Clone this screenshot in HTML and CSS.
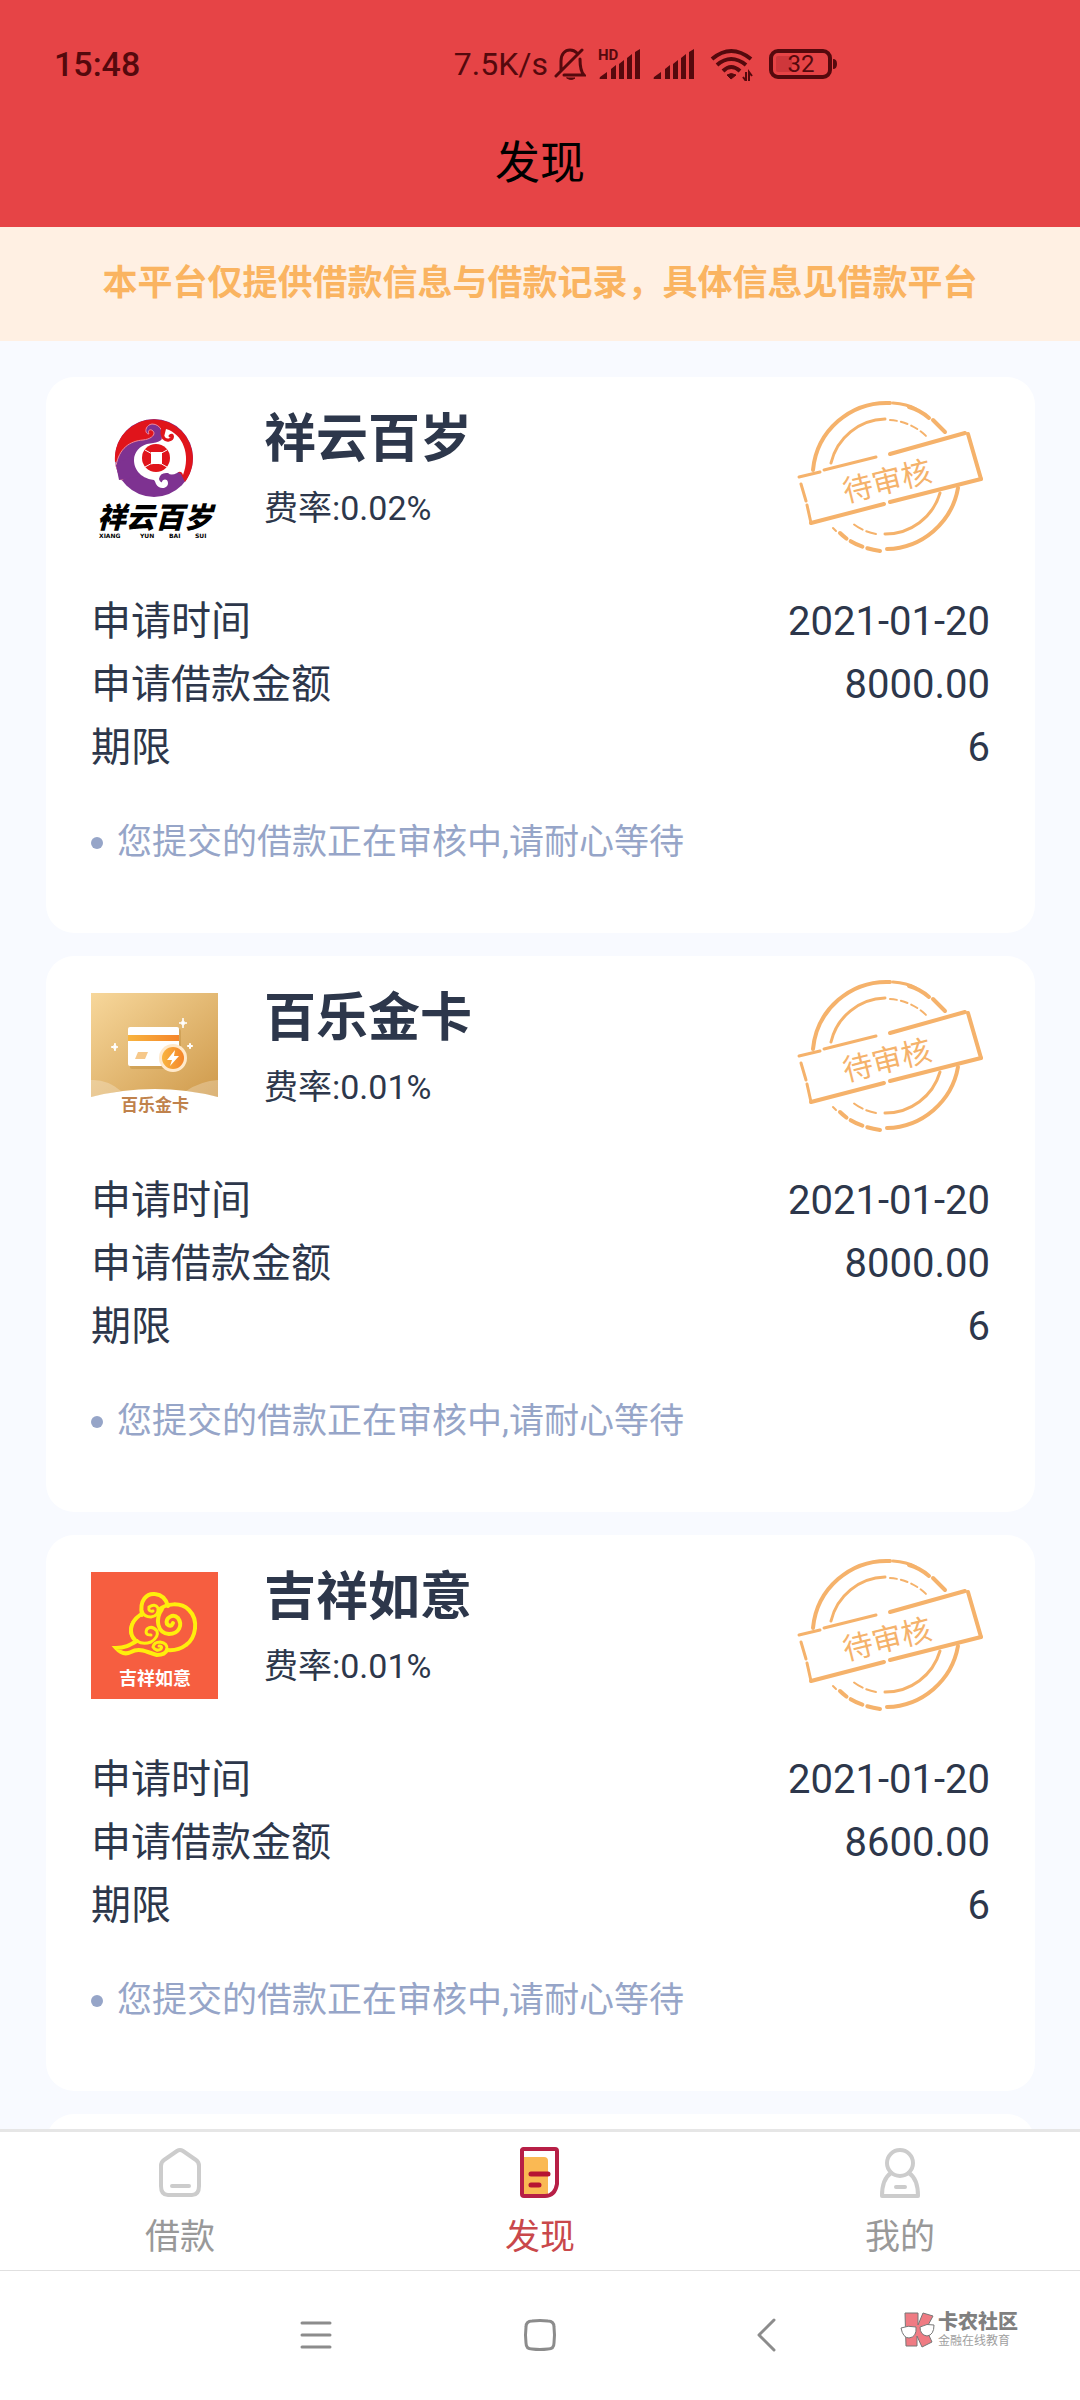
FILE: index.html
```html
<!DOCTYPE html>
<html lang="zh-CN">
<head>
<meta charset="utf-8">
<meta name="viewport" content="width=device-width, initial-scale=1">
<title>发现</title>
<link rel="stylesheet" href="styles.css">
</head>
<body>
<svg class="defs" aria-hidden="true">
	<symbol id="stamp" viewBox="0 0 190 160">
		<g fill="none" stroke="#f5b26b" stroke-linecap="round">
			<path d="M17 72A74 74 0 0 1 94 5" stroke-width="4"/>
			<path d="M97 5Q111 6 120 11" stroke-width="3"/>
			<path d="M113 9Q124 12 133 20M137 22L149 34" stroke-width="4"/>
			<path d="M35 65A57 57 0 0 1 89 21" stroke-width="3"/>
			<path d="M94 22A57 57 0 0 1 132 40" stroke-width="2" stroke-dasharray="7 4"/>
			<path d="M162 90A74 74 0 0 1 91 151" stroke-width="4"/>
			<path d="M84 153Q58 149 44 135" stroke-width="4" stroke-dasharray="13 5"/>
			<path d="M37 130L40 133" stroke-width="2"/>
			<path d="M144 95A57 57 0 0 1 89 136" stroke-width="3"/>
			<path d="M80 136Q65 133 55 124" stroke-width="2" stroke-dasharray="10 4"/>
			<path d="M3 79L24 74M28 72L80 59" stroke-width="3"/>
			<path d="M94 56L169 35" stroke-width="4"/>
			<path d="M172 36L185 81" stroke-width="4"/>
			<path d="M185 81L94 104M88 106L15 125" stroke-width="4"/>
			<path d="M5 86L10 103M11 107L15 125" stroke-width="3"/>
		</g>
	</symbol>
</svg>

<header class="header">
	<div class="status">
		<span class="time">15:48</span>
		<div class="status-icons">
			<span class="speed">7.5K/s</span>
			<svg width="32" height="34" viewBox="0 0 32 34" fill="none" stroke="#55090d" stroke-width="3" stroke-linecap="round">
				<path d="M7 23V14C7 7 11 3 16 3C19 3 21 4 23 6M26 12C26 20 27 25 30 28H10M2 29L28 3"/>
				<path d="M13 31H21Q17 34 13 31Z" fill="#55090d" stroke-width="1"/>
			</svg>
			<svg class="signal-hd" width="42" height="34" viewBox="0 0 42 34" fill="#55090d">
				<text class="hd" x="0" y="13">HD</text>
				<path d="M2 32Q1 32 2 30L9 25V32ZM13 22L18 18V32H13ZM21 17L26 13V32H21ZM29 11L34 7V32H29ZM37 5L42 2V32H37Z"/>
			</svg>
			<svg class="signal" width="42" height="34" viewBox="0 0 42 34" fill="#55090d">
				<path d="M2 32Q1 32 2 30L9 25V32ZM13 22L18 18V32H13ZM21 17L26 13V32H21ZM29 11L34 7V32H29ZM37 5L42 2V32H37Z"/>
			</svg>
			<svg class="wifi" width="43" height="34" viewBox="0 0 43 34" fill="none" stroke="#55090d" stroke-width="4">
				<path d="M2 12Q21 -4 41 12M7 18Q21 6 36 18M13 24Q21 16 30 24"/>
				<path d="M17 28Q21 25 26 28L21 32Z" fill="#55090d" stroke-width="1"/>
				<path d="M36 25V34L33 30M39 34V25L42 29" stroke-width="2"/>
			</svg>
			<svg class="battery" width="69" height="34" viewBox="0 0 69 34">
				<rect x="2" y="4" width="59" height="26" rx="7" fill="none" stroke="#55090d" stroke-width="4"/>
				<rect x="7" y="9" width="16" height="16" rx="2" fill="#cf373b"/>
				<path d="M64 12Q68 12 68 17Q68 22 64 22Z" fill="#55090d"/>
				<text class="level" x="32" y="25" text-anchor="middle">32</text>
			</svg>
		</div>
	</div>
	<h1 class="title">发现</h1>
</header>

<p class="notice">本平台仅提供借款信息与借款记录，具体信息见借款平台</p>

<main class="list">
	<section class="card">
		<div class="card-head">
			<svg class="logo" viewBox="0 0 127 127">
				<circle cx="63" cy="44" r="39" fill="#7e3291"/>
				<path d="M24 48A39 39 0 1 1 94 68L90 60L60 40Z" fill="#e0141b"/>
				<path d="M25 52C28 34 39 27 52 26C61 25 65 20 62 17C59 14 56 17 58 20C53 20 54 11 61 10C70 10 74 20 70 27L60 50L30 66Z" fill="#7e3291" stroke="#f08a9a" stroke-width="1"/>
				<path d="M25 51L62 29L60 60L28 66Z" fill="#7e3291"/>
				<path d="M75 15C92 20 100 41 92 61C91 57 88 57 86 59Q80 62 77 59Q69 58 68 65Q69 69 71 68C71 65 77 64 77 69C77 75 68 76 65 70Q64 67 63 66C48 64 43 54 43 46C43 38 49 32 56 30C65 29 71 27 73 23Z" fill="#fff"/>
				<path d="M73 12C68 20 73 27 78 26C83 25 82 19 79 22" fill="none" stroke="#e0141b" stroke-width="3" stroke-linecap="round"/>
				<circle cx="65" cy="44" r="14" fill="#e0141b"/>
				<rect x="60" y="38" width="11" height="12" fill="#fff"/>
				<path d="M54 36Q65 44 76 36M54 53Q65 45 76 53" fill="none" stroke="#fff" stroke-width="1"/>
				<text class="mark" x="64" y="114" text-anchor="middle" font-size="29" font-style="italic" font-weight="900" fill="#000">祥云百岁</text>
				<text class="mark-latin" x="8" y="124">XIANG</text>
				<text class="mark-latin" x="49" y="124">YUN</text>
				<text class="mark-latin" x="78" y="124">BAI</text>
				<text class="mark-latin" x="104" y="124">SUI</text>
			</svg>
			<div class="info">
				<h2 class="name">祥云百岁</h2>
				<p class="rate">费率:0.02%</p>
			</div>
			<svg class="stamp" viewBox="0 0 190 160">
				<use href="#stamp"/>
				<text class="stamp-text" x="91" y="94" text-anchor="middle" transform="rotate(-14 91 83)">待审核</text>
			</svg>
		</div>
		<dl class="rows">
			<div class="row"><dt>申请时间</dt><dd>2021-01-20</dd></div>
			<div class="row"><dt>申请借款金额</dt><dd>8000.00</dd></div>
			<div class="row"><dt>期限</dt><dd>6</dd></div>
		</dl>
		<p class="hint">您提交的借款正在审核中,请耐心等待</p>
	</section>

	<section class="card">
		<div class="card-head">
			<svg class="logo" viewBox="0 0 127 127">
				<defs>
					<linearGradient id="gold" x1="0" y1="0" x2="1" y2="1">
						<stop offset="0" stop-color="#f7d79b"/>
						<stop offset="1" stop-color="#cf9a4b"/>
					</linearGradient>
					<linearGradient id="orange" x1="0" y1="0" x2="1" y2="0">
						<stop offset="0" stop-color="#f8b43f"/>
						<stop offset="1" stop-color="#f5852a"/>
					</linearGradient>
				</defs>
				<path d="M0 0H127V104Q64 88 0 104Z" fill="url(#gold)"/>
				<path d="M0 87Q16 86 30 98L0 104ZM127 87Q110 88 95 98L127 104Z" fill="#fff" opacity=".25"/>
				<rect x="39" y="36" width="51" height="40" rx="2" fill="#b5802f" opacity=".35"/>
				<rect x="37" y="34" width="51" height="39" rx="2" fill="#fff"/>
				<rect x="37" y="42" width="51" height="6" fill="url(#orange)"/>
				<path d="M47 59H57L54 66H44Z" fill="#f6c88a"/>
				<circle cx="82" cy="65" r="14" fill="#ffe9cb"/>
				<circle cx="82" cy="65" r="11" fill="url(#orange)"/>
				<path d="M84 57L76 67H81L79 73L88 63H83Z" fill="#fff"/>
				<path d="M92 25Q92 30 96 30Q92 30 92 35Q92 30 88 30Q92 30 92 25ZM24 50Q24 54 27 54Q24 54 24 58Q24 54 20 54Q24 54 24 50ZM99 50Q99 53 102 53Q99 53 99 56Q99 53 96 53Q99 53 99 50Z" fill="#fff" stroke="#fff"/>
				<text class="mark" x="64" y="118" text-anchor="middle" font-size="17" font-weight="700" fill="#c0824c">百乐金卡</text>
			</svg>
			<div class="info">
				<h2 class="name">百乐金卡</h2>
				<p class="rate">费率:0.01%</p>
			</div>
			<svg class="stamp" viewBox="0 0 190 160">
				<use href="#stamp"/>
				<text class="stamp-text" x="91" y="94" text-anchor="middle" transform="rotate(-14 91 83)">待审核</text>
			</svg>
		</div>
		<dl class="rows">
			<div class="row"><dt>申请时间</dt><dd>2021-01-20</dd></div>
			<div class="row"><dt>申请借款金额</dt><dd>8000.00</dd></div>
			<div class="row"><dt>期限</dt><dd>6</dd></div>
		</dl>
		<p class="hint">您提交的借款正在审核中,请耐心等待</p>
	</section>

	<section class="card">
		<div class="card-head">
			<svg class="logo" viewBox="0 0 127 127">
				<rect width="127" height="127" fill="#f65e40"/>
				<g fill="none" stroke="#ffee0c" stroke-width="4" stroke-linecap="round">
					<path d="M51 43C48 28 56 21 64 22Q74 23 77 34"/>
					<path d="M51 39Q53 45 60 45Q68 44 67 36Q64 31 58 35Q57 40 62 39" stroke-width="3"/>
					<path d="M49 43C37 51 37 64 46 69Q52 73 60 70Q68 65 66 59Q61 53 56 57Q53 63 60 63" stroke-width="3"/>
					<path d="M49 43C38 51 38 62 44 68"/>
					<path d="M68 38C75 31 90 30 98 38C108 48 105 66 95 73Q87 79 76 78"/>
					<path d="M71 37C64 47 66 61 78 62C88 62 92 53 87 46C82 41 74 46 76 52Q80 56 82 51"/>
					<path d="M62 75Q63 70 69 70Q77 71 76 78M62 75Q65 80 70 77Q72 74 68 74" stroke-width="3"/>
					<path d="M46 69C39 73 34 76 25 76Q32 84 40 80C49 75 58 81 66 83Q74 83 76 78"/>
				</g>
				<text class="mark" x="64" y="113" text-anchor="middle" font-size="18" font-weight="700" fill="#fff">吉祥如意</text>
			</svg>
			<div class="info">
				<h2 class="name">吉祥如意</h2>
				<p class="rate">费率:0.01%</p>
			</div>
			<svg class="stamp" viewBox="0 0 190 160">
				<use href="#stamp"/>
				<text class="stamp-text" x="91" y="94" text-anchor="middle" transform="rotate(-14 91 83)">待审核</text>
			</svg>
		</div>
		<dl class="rows">
			<div class="row"><dt>申请时间</dt><dd>2021-01-20</dd></div>
			<div class="row"><dt>申请借款金额</dt><dd>8600.00</dd></div>
			<div class="row"><dt>期限</dt><dd>6</dd></div>
		</dl>
		<p class="hint">您提交的借款正在审核中,请耐心等待</p>
	</section>

	<section class="card"></section>
</main>

<nav class="tabs">
	<a class="tab" href="#">
		<svg width="52" height="52" viewBox="0 0 52 52" fill="none" stroke="#ccc" stroke-width="4" stroke-linejoin="round" stroke-linecap="round">
			<path d="M23 5Q26 3 29 5L42 14Q45 16 45 20V40Q45 49 38 49H14Q7 49 7 40V20Q7 16 10 14ZM18 40H35"/>
		</svg>
		<span>借款</span>
	</a>
	<a class="tab active" href="#">
		<svg width="52" height="52" viewBox="0 0 52 52" fill="none" stroke="#b71f46" stroke-width="4" stroke-linejoin="round" stroke-linecap="round">
			<path d="M8 11H30Q34 11 34 15V49H8Z" fill="#fab953" stroke="none"/>
			<path d="M9 3H41Q43 3 43 5V38Q41 50 31 50H10Q8 50 8 48V4Z"/>
			<path d="M17 28H34M17 39H25" stroke="#b61432" stroke-width="5"/>
		</svg>
		<span>发现</span>
	</a>
	<a class="tab" href="#">
		<svg width="52" height="52" viewBox="0 0 52 52" fill="none" stroke="#ccc" stroke-width="4" stroke-linejoin="round" stroke-linecap="round">
			<circle cx="26" cy="17" r="13"/>
			<path d="M17 27Q8 33 8 50H44Q44 33 35 27M22 41H31"/>
		</svg>
		<span>我的</span>
	</a>
</nav>

<footer class="system">
	<button class="key" aria-label="菜单">
		<svg width="36" height="36" viewBox="0 0 36 36" fill="none" stroke="#8c8c8c" stroke-width="3" stroke-linecap="round"><path d="M5 5H33M5 17H33M5 29H33"/></svg>
	</button>
	<button class="key" aria-label="主页">
		<svg width="36" height="36" viewBox="0 0 36 36" fill="none" stroke="#8c8c8c" stroke-width="3"><path d="M10 3Q18 2 26 3Q32 3 32 9Q33 17 32 25Q32 31 26 31Q18 32 10 31Q4 31 4 25Q3 17 4 9Q4 3 10 3Z"/></svg>
	</button>
	<button class="key" aria-label="返回">
		<svg width="36" height="36" viewBox="0 0 36 36" fill="none" stroke="#8c8c8c" stroke-width="3" stroke-linecap="round" stroke-linejoin="round"><path d="M27 2L12 17L27 32"/></svg>
	</button>
	<div class="brand">
		<svg width="36" height="36" viewBox="0 0 36 36" fill="#ef7b83" stroke="#777" stroke-width="1">
			<path d="M5 1H18V13L23 1L33 4L26 17L32 30L22 35L17 24V34H6Z"/>
			<path d="M1 16Q8 13 16 15Q17 25 9 26Q3 26 1 16ZM20 15Q27 11 34 13Q34 23 27 24Q20 23 20 15Z" fill="#fff"/>
		</svg>
		<div class="brand-text">
			<strong>卡农社区</strong>
			<small>金融在线教育</small>
		</div>
	</div>
</footer>
</body>
</html>
```

FILE: styles.css
```css
*
{
	box-sizing:border-box;
}
body
{
	margin:0;
	height:100vh;
	display:flex;
	flex-direction:column;
	background:#f8faff;
	color:#2d374b;
	font-family:Roboto, "Noto Sans CJK SC", sans-serif;
}
h1, h2, p, dl, dd
{
	margin:0;
}
svg
{
	display:block;
	flex:none;
}
.defs
{
	position:absolute;
	width:0;
	height:0;
}
.header
{
	background:#e64446;
	padding-top:40px;
	height:227px;
}
.status
{
	display:flex;
	justify-content:space-between;
	align-items:center;
	height:48px;
	padding:0 242px 0 54px;
	color:#55090d;
}
.time
{
	font-size:34px;
	font-weight:500;
}
.status-icons
{
	display:flex;
	align-items:center;
}
.speed
{
	font-size:32px;
	margin-right:6px;
}
.signal-hd, .signal
{
	margin-left:12px;
}
.wifi, .battery
{
	margin-left:16px;
}
.hd
{
	font-size:15px;
	font-weight:700;
}
.level
{
	font-size:24px;
	fill:#55090d;
}
.title
{
	margin-top:42px;
	line-height:68px;
	text-align:center;
	font-size:45px;
	font-weight:400;
	color:#000;
}
.notice
{
	padding:32px 45px;
	line-height:50px;
	text-align:center;
	font-size:35px;
	font-weight:700;
	color:#fab461;
	background:#fff0e3;
}
.list
{
	flex:1;
	min-height:0;
	overflow:hidden;
	padding:36px 45px 0 46px;
}
.card
{
	min-height:120px;
	margin-bottom:23px;
	padding:21px 45px 66px;
	background:#fff;
	border-radius:28px;
}
.card-head
{
	display:flex;
	align-items:flex-start;
	height:192px;
}
.logo
{
	width:127px;
	height:127px;
	margin-top:16px;
}
.mark
{
	font-family:"Noto Sans CJK SC", sans-serif;
}
.mark-latin
{
	font-family:"DejaVu Sans", sans-serif;
	font-size:6px;
	font-weight:700;
}
.info
{
	flex:1;
	padding:12px 0 0 46px;
}
.name
{
	font-size:52px;
	line-height:60px;
}
.rate
{
	margin-top:14px;
	font-size:34px;
	line-height:48px;
}
.stamp
{
	width:190px;
	height:160px;
	margin-right:4px;
}
.stamp-text
{
	font-size:30px;
	fill:#f5b26b;
}
.row
{
	display:flex;
	justify-content:space-between;
	font-size:40px;
	line-height:63px;
}
.hint
{
	display:flex;
	align-items:center;
	margin-top:40px;
	font-size:35px;
	line-height:48px;
	color:#96a5c8;
}
.hint::before
{
	content:"";
	width:12px;
	height:12px;
	margin-right:14px;
	border-radius:50%;
	background:#96a5c8;
}
.tabs
{
	display:flex;
	background:#fff;
	border-top:3px solid #e6e6e6;
	border-bottom:1px solid #e0e0e0;
}
.tab
{
	flex:1;
	display:flex;
	flex-direction:column;
	align-items:center;
	gap:16px;
	padding:14px 0 8px;
	font-size:35px;
	line-height:48px;
	color:#999;
	text-decoration:none;
}
.active
{
	color:#c9484b;
}
.system
{
	position:relative;
	display:flex;
	justify-content:center;
	height:129px;
	background:#fff;
}
.key
{
	display:flex;
	align-items:center;
	justify-content:center;
	width:225px;
	border:0;
	background:none;
}
/* brand mark floats over the key bar */
.brand
{
	position:absolute;
	right:62px;
	top:40px;
	display:flex;
	align-items:center;
	gap:2px;
	color:#808080;
}
.brand-text
{
	display:flex;
	flex-direction:column;
}
.brand-text strong
{
	font-size:20px;
	line-height:22px;
	font-weight:900;
}
.brand-text small
{
	font-size:12px;
	line-height:16px;
	color:#a0a0a0;
}
```
